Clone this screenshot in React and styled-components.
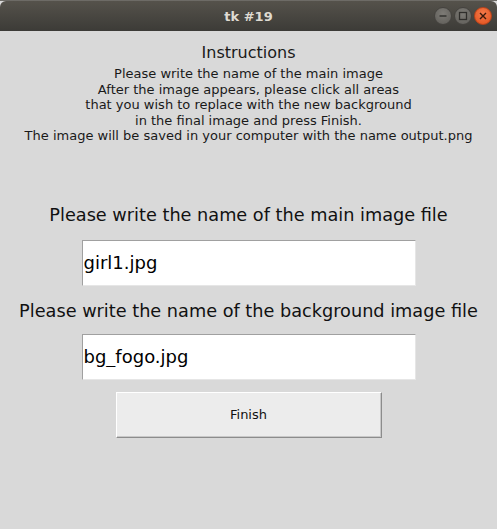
import React from 'react';
import styled, { createGlobalStyle } from 'styled-components';

const GlobalStyle = createGlobalStyle`
  html, body {
    margin: 0;
    padding: 0;
    background: #d9d9d9;
    overflow: hidden;
  }
  * {
    box-sizing: border-box;
  }
`;

const Screen = styled.div`
  width: 497px;
  height: 529px;
  display: flex;
  flex-direction: column;
  background: #d9d9d9;
  font-family: "DejaVu Sans", "Liberation Sans", sans-serif;
  color: #000;
`;

const DesktopStrip = styled.div`
  height: 1px;
  background: #6d6b66;
`;

const TitleBar = styled.div`
  position: relative;
  height: 30px;
  border-radius: 6px 6px 0 0;
  background: linear-gradient(#55524b, #3c3b37);
  display: flex;
  align-items: center;
  justify-content: center;
`;

const Title = styled.span`
  color: #dfdbd2;
  font-size: 13px;
  font-weight: bold;
`;

const WindowButtons = styled.div`
  position: absolute;
  right: 5px;
  top: 6px;
  display: flex;
  gap: 2px;
`;

const WinButton = styled.div`
  width: 18px;
  height: 18px;
  border-radius: 50%;
  display: flex;
  align-items: center;
  justify-content: center;
  background: ${(p) => (p.$close ? 'radial-gradient(circle at 50% 35%, #f47a4a, #e0501c)' : 'radial-gradient(circle at 50% 35%, #7d7b76, #5e5c57)')};
  border: 1px solid ${(p) => (p.$close ? '#b8431a' : '#45433f')};
`;

const Body = styled.div`
  flex: 1;
  display: flex;
  flex-direction: column;
  align-items: center;
`;

const Heading = styled.div`
  margin-top: 11px;
  font-size: 16px;
  line-height: 21px;
  color: #1a1a1a;
`;

const Instructions = styled.div`
  padding-top: 3px;
  font-size: 13px;
  line-height: 15.5px;
  text-align: center;
  color: #1a1a1a;
  white-space: pre;
`;

const Label = styled.div`
  margin-top: ${(p) => p.$top}px;
  font-size: 17.7px;
  line-height: 22px;
  color: #111;
`;

const Entry = styled.input`
  margin-top: ${(p) => p.$top}px;
  width: 334px;
  height: 46px;
  padding: 0 0 0 1px;
  border: 1px solid;
  border-color: #a0a0a0 #e6e6e6 #e6e6e6 #a0a0a0;
  background: #fff;
  font-family: "DejaVu Sans", "Liberation Sans", sans-serif;
  font-size: 18px;
  color: #000;
  outline: none;
`;

const FinishButton = styled.button`
  margin-top: 12px;
  width: 266px;
  height: 46px;
  background: #ececec;
  border: 1px solid;
  border-color: #ffffff #8c8c8c #8c8c8c #ffffff;
  box-shadow: inset -1px -1px 0 #c8c8c8;
  font-family: "DejaVu Sans", "Liberation Sans", sans-serif;
  font-size: 13px;
  color: #111;
`;

const instructionLines = [
  'Please write the name of the main image',
  'After the image appears, please click all areas',
  'that you wish to replace with the new background',
  'in the final image and press Finish.',
  'The image will be saved in your computer with the name output.png',
];

export default function App() {
  return (
    <Screen>
      <GlobalStyle />
      <DesktopStrip />
      <TitleBar>
        <Title>tk #19</Title>
        <WindowButtons>
          <WinButton>
            <svg width="10" height="10" viewBox="0 0 10 10">
              <path d="M1.5 5h7" stroke="#2f2e2b" strokeWidth="1.4" />
            </svg>
          </WinButton>
          <WinButton>
            <svg width="10" height="10" viewBox="0 0 10 10">
              <rect x="1.5" y="1.5" width="7" height="7" fill="none" stroke="#2f2e2b" strokeWidth="1.3" />
            </svg>
          </WinButton>
          <WinButton $close>
            <svg width="10" height="10" viewBox="0 0 10 10">
              <path d="M2 2l6 6M8 2l-6 6" stroke="#3a1a0c" strokeWidth="1.4" />
            </svg>
          </WinButton>
        </WindowButtons>
      </TitleBar>
      <Body>
        <Heading>Instructions</Heading>
        <Instructions>
          {instructionLines.map((line) => (
            <div key={line}>{line}</div>
          ))}
        </Instructions>
        <Label $top={60}>Please write the name of the main image file</Label>
        <Entry $top={14} defaultValue="girl1.jpg" />
        <Label $top={14}>Please write the name of the background image file</Label>
        <Entry $top={12} defaultValue="bg_fogo.jpg" />
        <FinishButton>Finish</FinishButton>
      </Body>
    </Screen>
  );
}
